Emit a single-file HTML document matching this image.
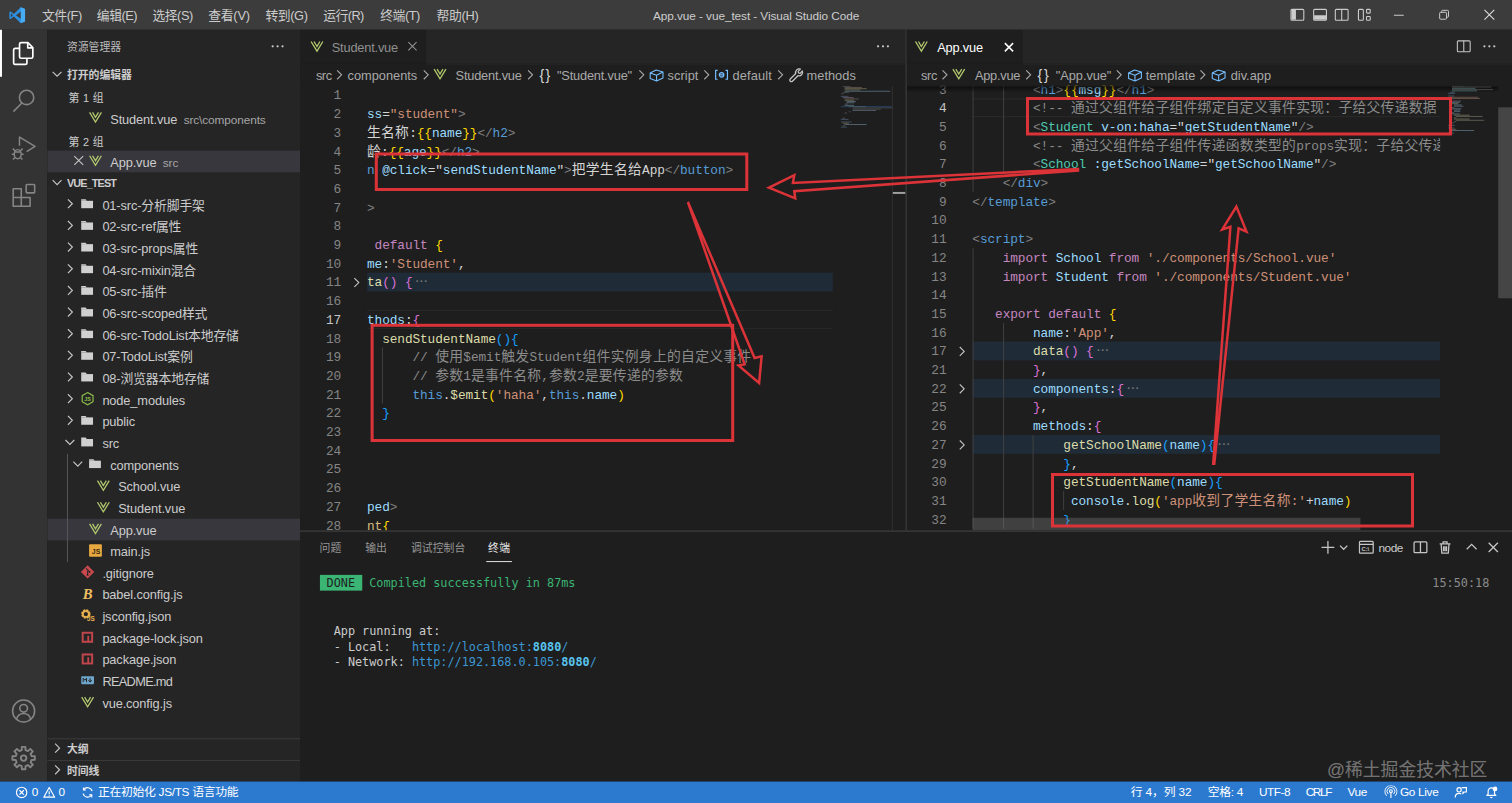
<!DOCTYPE html>
<html lang="zh-CN"><head><meta charset="utf-8"><title>App.vue - vue_test - Visual Studio Code</title>
<style>
*{box-sizing:border-box;margin:0;padding:0}
html,body{width:1512px;height:803px;overflow:hidden;background:#1e1e1e}
body{font-family:"Liberation Sans","Noto Sans CJK SC",sans-serif;font-size:13px;color:#ccc;position:relative}
#app{position:absolute;left:0;top:0;width:1536px;height:816px;transform:scale(.984375);transform-origin:0 0;background:#1e1e1e;overflow:hidden}
.abs{position:absolute}
svg{display:block}
/* title bar */
#title{position:absolute;left:0;top:0;width:1536px;height:30.3px;z-index:5;background:#3c3c3c;color:#ccc}
#title .menu{position:absolute;top:1px;height:30px;line-height:30px;font-size:13px;white-space:nowrap}
#title .ttl{position:absolute;left:0;width:1536px;text-align:center;top:0;height:30px;line-height:30px;font-size:12.6px;color:#ccc}
/* activity bar */
#act{position:absolute;left:0;top:30px;width:48px;height:764px;background:#333333}
#act .it{position:absolute;left:0;width:48px;height:48px}
#act .it svg{position:absolute;left:12px;top:12px}
/* sidebar */
#side{position:absolute;left:48px;top:30px;width:257px;height:764px;background:#252526;overflow:hidden}
#side .row{position:absolute;left:0;width:257px;height:22px;line-height:22px;white-space:nowrap;font-size:13px;color:#ccc}
#side .row.sel{background:#37373d}
#side .hdr{font-weight:bold;font-size:11px;color:#ccc}
#side .lbl{position:absolute;top:2.1px;font-size:13px;letter-spacing:-.12px}
#side .lbl.hdr{top:0;font-size:11px;letter-spacing:0}
#side .desc{color:#a5a5a5;font-size:12px;margin-left:6.5px;letter-spacing:-.1px}
#side .ic{position:absolute;top:2.3px}
/* editor groups */
.grp{position:absolute;top:30px;height:509px;background:#1e1e1e;overflow:hidden}
.tabs{position:absolute;left:0;top:0;right:0;height:35px;background:#252526}
.tab{position:absolute;top:0;height:35px;background:#1e1e1e;line-height:38.6px;font-size:13px;white-space:nowrap}
.bc{position:absolute;left:0;top:35px;right:0;height:22px;line-height:24.2px;font-size:13px;color:#a9a9a9;white-space:nowrap;background:#1e1e1e}
.bc span,.bc svg{position:absolute}
.ed{position:absolute;left:0;top:57px;right:0;bottom:0;overflow:hidden}
.ln{position:absolute;left:0;height:19px;line-height:19px;font-family:"Liberation Mono","Noto Sans CJK SC",monospace;font-size:12.83px;white-space:pre}
.ln .no{position:absolute;left:0;top:.7px;width:41.5px;text-align:right;color:#858585}
.ln .no.cur{color:#c6c6c6}
.ln .tx{position:absolute;top:1.2px;color:#d4d4d4}
.ln .tx i{font-style:normal}
.fold{background:rgba(38,79,120,.3)}
/* panel */
#panel{position:absolute;left:305px;top:540px;width:1231px;height:254px;background:#1e1e1e}
#panel .pt{position:absolute;top:0;height:35px;line-height:35px;font-size:11px;color:#969696;white-space:nowrap}
.term{position:absolute;font-family:"DejaVu Sans Mono","Noto Sans CJK SC",monospace;font-size:12px;line-height:16.2px;white-space:pre;color:#ccc}
/* status */
#status{position:absolute;left:0;top:794px;width:1536px;height:22px;background:#2c7ad0;color:#fff;font-size:12px;line-height:23.2px;white-space:nowrap}
#status span,#status svg{position:absolute}
#anno{position:absolute;left:0;top:0;width:1512px;height:803px;pointer-events:none}
.ln{font-size:13px;letter-spacing:-.1px}
.ln b{font-weight:normal;font-size:14px;letter-spacing:.3px}
.term b{font-weight:bold}
#g2 .ln .no{width:40.2px}
</style></head>
<body>
<div id="app">
<div id="title">
<svg class="abs" style="left:9px;top:7px" width="17" height="17" viewBox="0 0 100 100"><path fill="#2c8fe0" d="M71 2 30 42 11 27 3 31v38l8 4 19-15 41 40 26-11V13z"/><path fill="#3c3c3c" d="M72 28 42 50l30 22zM12 38v24l12-12z"/><path fill="#4aaef5" d="M71 2 97 13v74L71 98z" opacity=".95"/></svg>
<div class="menu" style="left:42.7px;letter-spacing:-0.46px">文件(F)</div>
<div class="menu" style="left:98.4px;letter-spacing:-0.48px">编辑(E)</div>
<div class="menu" style="left:154.8px;letter-spacing:-0.46px">选择(S)</div>
<div class="menu" style="left:211.6px;letter-spacing:-0.26px">查看(V)</div>
<div class="menu" style="left:269.7px;letter-spacing:-0.42px">转到(G)</div>
<div class="menu" style="left:328.5px;letter-spacing:-0.60px">运行(R)</div>
<div class="menu" style="left:386.3px;letter-spacing:-0.46px">终端(T)</div>
<div class="menu" style="left:443.4px;letter-spacing:-0.28px">帮助(H)</div>
<div class="menu" style="left:663.4px;font-size:12px;letter-spacing:-0.08px">App.vue - vue_test - Visual Studio Code</div>
<svg class="abs" style="left:1309.5px;top:7px" width="16" height="16" viewBox="0 0 16 16" fill="none" stroke="#ccc" stroke-width="1.1"><rect x="1.5" y="2.5" width="13" height="11" rx="1"/><rect x="2" y="3" width="4.5" height="10" fill="#ccc" stroke="none"/></svg>
<svg class="abs" style="left:1332.5px;top:7px" width="16" height="16" viewBox="0 0 16 16" fill="none" stroke="#ccc" stroke-width="1.1"><rect x="1.5" y="2.5" width="13" height="11" rx="1"/><rect x="2" y="8.5" width="12" height="4.5" fill="#ccc" stroke="none"/></svg>
<svg class="abs" style="left:1354.5px;top:7px" width="16" height="16" viewBox="0 0 16 16" fill="none" stroke="#ccc" stroke-width="1.1"><rect x="1.5" y="2.5" width="13" height="11" rx="1"/><path d="M8 2.5v11"/></svg>
<svg class="abs" style="left:1377.5px;top:7px" width="16" height="16" viewBox="0 0 16 16" fill="none" stroke="#ccc" stroke-width="1.1"><rect x="2" y="2.5" width="5" height="11" rx="1"/><rect x="10.2" y="2.5" width="3.8" height="3.8" rx=".8"/><rect x="10.2" y="9.7" width="3.8" height="3.8" rx=".8"/></svg>
<svg class="abs" style="left:1415px;top:9px" width="12" height="12" viewBox="0 0 12 12" stroke="#ccc" stroke-width="1" fill="none"><path d="M1 6.5h10"/></svg>
<svg class="abs" style="left:1461px;top:9px" width="12" height="12" viewBox="0 0 12 12" stroke="#ccc" stroke-width="1" fill="none"><rect x="1.5" y="3.5" width="7" height="7" rx="1"/><path d="M3.5 3.5v-1a1 1 0 0 1 1-1h5a1 1 0 0 1 1 1v5a1 1 0 0 1-1 1h-1"/></svg>
<svg class="abs" style="left:1507px;top:9px" width="12" height="12" viewBox="0 0 12 12" stroke="#ddd" stroke-width="1.1" fill="none"><path d="M1 1l10 10M11 1 1 11"/></svg>
</div>
<div id="act">
<div class="abs" style="left:0;top:0;width:2px;height:48px;background:#fff"></div>
<div class="it" style="top:0px"><svg width="24" height="24" viewBox="0 0 24 24" fill="none" stroke="#fff" stroke-width="1.7" stroke-linejoin="round" style="overflow:visible"><path d="M9.350 1.350h7l5 5v9.300a1.500 1.500 0 0 1-1.500 1.500h-10.500a1.500 1.500 0 0 1-1.500-1.500v-12.800a1.500 1.500 0 0 1 1.500-1.500z"/><path d="M16.200 1.600v5h5"/><path d="M7.850 7.150h-4.500a1.500 1.500 0 0 0-1.500 1.500v13.300a1.500 1.500 0 0 0 1.500 1.500h10.500a1.500 1.500 0 0 0 1.500-1.500v-4.800"/></svg></div>
<div class="it" style="top:48px"><svg width="24" height="24" viewBox="0 0 24 24" fill="none" stroke="#858585" stroke-width="1.6" stroke-linejoin="round" style="overflow:visible"><circle cx="15" cy="9" r="7.300"/><path d="M10.200 14.600 1.600 23.400"/></svg></div>
<div class="it" style="top:96px"><svg width="24" height="24" viewBox="0 0 24 24" fill="none" stroke="#858585" stroke-width="1.5" stroke-linejoin="round" style="overflow:visible"><path d="M7.800 10V1.200l15.800 9.500-8.500 5.300"/><ellipse cx="6" cy="18.600" rx="3.500" ry="4.600" /><path d="M3.300 15.200 1 13M8.700 15.200 11 13M2.500 18.800H0M9.500 18.800H12M3.300 22 1.200 24M8.700 22l2.100 2M2.800 16.500h6.400"/></svg></div>
<div class="it" style="top:144px"><svg width="24" height="24" viewBox="0 0 24 24" fill="none" stroke="#858585" stroke-width="1.6" stroke-linejoin="round" style="overflow:visible"><path d="M1.400 5.800h8.200v8.800h9v9H1.400zM1.400 14.600h8.200v9"/><rect x="14.600" y="1.500" width="8.600" height="8.400" rx=".8"/></svg></div>
<div class="it" style="top:668px"><svg width="24" height="24" viewBox="0 0 24 24" fill="none" stroke="#858585" stroke-width="1.6" stroke-linejoin="round" style="overflow:visible"><circle cx="12" cy="12.300" r="11.200"/><circle cx="12" cy="9.500" r="3.900"/><path d="M4.800 20.500c1-3.600 3.700-5.700 7.200-5.700s6.200 2.100 7.200 5.700"/></svg></div>
<div class="it" style="top:716px"><svg width="24" height="24" viewBox="0 0 24 24" fill="none" stroke="#858585" stroke-width="1.9" stroke-linejoin="round" style="overflow:visible"><circle cx="12" cy="12.100" r="2.800"/><path d="M13.94 20.17L13.80 23.46L10.20 23.46L10.06 20.17L7.66 19.18L5.24 21.40L2.70 18.86L4.92 16.44L3.93 14.04L0.64 13.90L0.64 10.30L3.93 10.16L4.92 7.76L2.70 5.34L5.24 2.80L7.66 5.02L10.06 4.03L10.20 0.74L13.80 0.74L13.94 4.03L16.34 5.02L18.76 2.80L21.30 5.34L19.08 7.76L20.07 10.16L23.36 10.30L23.36 13.90L20.07 14.04L19.08 16.44L21.30 18.86L18.76 21.40L16.34 19.18Z"/></svg></div>
</div>
<div id="side">
<div class="abs" style="left:20px;top:1.3px;height:35px;line-height:35px;font-size:11px;color:#bbb">资源管理器</div>
<svg class="abs" style="left:226px;top:8.600px" width="16" height="16" viewBox="0 0 16 16" fill="#c5c5c5"><circle cx="3" cy="8" r="1.150"/><circle cx="8" cy="8" r="1.150"/><circle cx="13" cy="8" r="1.150"/></svg>
<div class="row " style="top:35px"><svg class="ic" style="left:1.7px" width="16" height="16" viewBox="0 0 16 16" fill="none" stroke="#c5c5c5" stroke-width="1.200"><path d="M3.500 6l4.500 4.500L12.500 6"/></svg><span class="lbl hdr" style="left:20px">打开的编辑器</span></div>
<div class="row " style="top:57px"><span class="lbl" style="left:21.500px;font-size:11px;top:1.8px;letter-spacing:.4px">第 1 组</span></div>
<div class="row " style="top:79px"><svg class="ic" style="left:40.5px" width="16" height="16" viewBox="0 0 16 16" fill="none" stroke="#b3c96e" stroke-width="1.300"><path d="M2 3.200l6 9.800 6-9.800"/><path d="M5 3.200l3 5 3-5"/></svg><span class="lbl" style="left:64px;top:2.1px">Student.vue<span class="desc">src\components</span></span></div>
<div class="row " style="top:101px"><span class="lbl" style="left:21.500px;font-size:11px;top:1.8px;letter-spacing:.4px">第 2 组</span></div>
<div class="row sel" style="top:123px"><svg class="ic" style="left:24px" width="16" height="16" viewBox="0 0 16 16" fill="none" stroke="#c5c5c5" stroke-width="1.100"><path d="M3.500 3.500l9 9M12.500 3.500l-9 9"/></svg><svg class="ic" style="left:40.5px" width="16" height="16" viewBox="0 0 16 16" fill="none" stroke="#b3c96e" stroke-width="1.300"><path d="M2 3.200l6 9.800 6-9.800"/><path d="M5 3.200l3 5 3-5"/></svg><span class="lbl" style="left:64px;top:2.1px">App.vue<span class="desc">src</span></span></div>
<div class="row " style="top:145px"><svg class="ic" style="left:1.7px" width="16" height="16" viewBox="0 0 16 16" fill="none" stroke="#c5c5c5" stroke-width="1.200"><path d="M3.500 6l4.500 4.500L12.500 6"/></svg><span class="lbl hdr" style="left:20px;letter-spacing:-0.86px">VUE_TEST</span></div>
<div class="row " style="top:167px"><svg class="ic" style="left:15px" width="16" height="16" viewBox="0 0 16 16" fill="none" stroke="#c5c5c5" stroke-width="1.200"><path d="M6 3.500l4.500 4.500L6 12.500"/></svg><svg class="ic" style="left:32.6px" width="16" height="16" viewBox="0 0 16 16" fill="#d0d0d0"><path d="M1.500 3.500h4.500l1.200 1.500h-5.700z"/><rect x="1.500" y="5" width="12" height="7.500"/></svg><span class="lbl" style="left:56px;top:0.7px">01-src-分析脚手架</span></div>
<div class="row " style="top:189px"><svg class="ic" style="left:15px" width="16" height="16" viewBox="0 0 16 16" fill="none" stroke="#c5c5c5" stroke-width="1.200"><path d="M6 3.500l4.500 4.500L6 12.500"/></svg><svg class="ic" style="left:32.6px" width="16" height="16" viewBox="0 0 16 16" fill="#d0d0d0"><path d="M1.500 3.500h4.500l1.200 1.500h-5.700z"/><rect x="1.500" y="5" width="12" height="7.500"/></svg><span class="lbl" style="left:56px;top:0.7px">02-src-ref属性</span></div>
<div class="row " style="top:211px"><svg class="ic" style="left:15px" width="16" height="16" viewBox="0 0 16 16" fill="none" stroke="#c5c5c5" stroke-width="1.200"><path d="M6 3.500l4.500 4.500L6 12.500"/></svg><svg class="ic" style="left:32.6px" width="16" height="16" viewBox="0 0 16 16" fill="#d0d0d0"><path d="M1.500 3.500h4.500l1.200 1.500h-5.700z"/><rect x="1.500" y="5" width="12" height="7.500"/></svg><span class="lbl" style="left:56px;top:0.7px">03-src-props属性</span></div>
<div class="row " style="top:233px"><svg class="ic" style="left:15px" width="16" height="16" viewBox="0 0 16 16" fill="none" stroke="#c5c5c5" stroke-width="1.200"><path d="M6 3.500l4.500 4.500L6 12.500"/></svg><svg class="ic" style="left:32.6px" width="16" height="16" viewBox="0 0 16 16" fill="#d0d0d0"><path d="M1.500 3.500h4.500l1.200 1.500h-5.700z"/><rect x="1.500" y="5" width="12" height="7.500"/></svg><span class="lbl" style="left:56px;top:0.7px">04-src-mixin混合</span></div>
<div class="row " style="top:255px"><svg class="ic" style="left:15px" width="16" height="16" viewBox="0 0 16 16" fill="none" stroke="#c5c5c5" stroke-width="1.200"><path d="M6 3.500l4.500 4.500L6 12.500"/></svg><svg class="ic" style="left:32.6px" width="16" height="16" viewBox="0 0 16 16" fill="#d0d0d0"><path d="M1.500 3.500h4.500l1.200 1.500h-5.700z"/><rect x="1.500" y="5" width="12" height="7.500"/></svg><span class="lbl" style="left:56px;top:0.7px">05-src-插件</span></div>
<div class="row " style="top:277px"><svg class="ic" style="left:15px" width="16" height="16" viewBox="0 0 16 16" fill="none" stroke="#c5c5c5" stroke-width="1.200"><path d="M6 3.500l4.500 4.500L6 12.500"/></svg><svg class="ic" style="left:32.6px" width="16" height="16" viewBox="0 0 16 16" fill="#d0d0d0"><path d="M1.500 3.500h4.500l1.200 1.500h-5.700z"/><rect x="1.500" y="5" width="12" height="7.500"/></svg><span class="lbl" style="left:56px;top:0.7px">06-src-scoped样式</span></div>
<div class="row " style="top:299px"><svg class="ic" style="left:15px" width="16" height="16" viewBox="0 0 16 16" fill="none" stroke="#c5c5c5" stroke-width="1.200"><path d="M6 3.500l4.500 4.500L6 12.500"/></svg><svg class="ic" style="left:32.6px" width="16" height="16" viewBox="0 0 16 16" fill="#d0d0d0"><path d="M1.500 3.500h4.500l1.200 1.500h-5.700z"/><rect x="1.500" y="5" width="12" height="7.500"/></svg><span class="lbl" style="left:56px;top:0.7px">06-src-TodoList本地存储</span></div>
<div class="row " style="top:321px"><svg class="ic" style="left:15px" width="16" height="16" viewBox="0 0 16 16" fill="none" stroke="#c5c5c5" stroke-width="1.200"><path d="M6 3.500l4.500 4.500L6 12.500"/></svg><svg class="ic" style="left:32.6px" width="16" height="16" viewBox="0 0 16 16" fill="#d0d0d0"><path d="M1.500 3.500h4.500l1.200 1.500h-5.700z"/><rect x="1.500" y="5" width="12" height="7.500"/></svg><span class="lbl" style="left:56px;top:0.7px">07-TodoList案例</span></div>
<div class="row " style="top:343px"><svg class="ic" style="left:15px" width="16" height="16" viewBox="0 0 16 16" fill="none" stroke="#c5c5c5" stroke-width="1.200"><path d="M6 3.500l4.500 4.500L6 12.500"/></svg><svg class="ic" style="left:32.6px" width="16" height="16" viewBox="0 0 16 16" fill="#d0d0d0"><path d="M1.500 3.500h4.500l1.200 1.500h-5.700z"/><rect x="1.500" y="5" width="12" height="7.500"/></svg><span class="lbl" style="left:56px;top:0.7px">08-浏览器本地存储</span></div>
<div class="row " style="top:365px"><svg class="ic" style="left:15px" width="16" height="16" viewBox="0 0 16 16" fill="none" stroke="#c5c5c5" stroke-width="1.200"><path d="M6 3.500l4.500 4.500L6 12.500"/></svg><svg class="ic" style="left:32.6px" width="16" height="16" viewBox="0 0 16 16" fill="none" stroke="#8dc149" stroke-width="1.200"><path d="M8 1.800l5.500 3.100v6.200L8 14.200l-5.500-3.100V4.900z"/><text x="8" y="10.300" font-size="5.500" font-weight="bold" fill="#8dc149" stroke="none" text-anchor="middle" font-family="Liberation Sans,sans-serif">JS</text></svg><span class="lbl" style="left:56px;top:1.1px">node_modules</span></div>
<div class="row " style="top:387px"><svg class="ic" style="left:15px" width="16" height="16" viewBox="0 0 16 16" fill="none" stroke="#c5c5c5" stroke-width="1.200"><path d="M6 3.500l4.500 4.500L6 12.500"/></svg><svg class="ic" style="left:32.6px" width="16" height="16" viewBox="0 0 16 16" fill="#d0d0d0"><path d="M1.500 3.500h4.500l1.200 1.500h-5.700z"/><rect x="1.500" y="5" width="12" height="7.500"/></svg><span class="lbl" style="left:56px;top:1.1px">public</span></div>
<div class="row " style="top:409px"><svg class="ic" style="left:15px" width="16" height="16" viewBox="0 0 16 16" fill="none" stroke="#c5c5c5" stroke-width="1.200"><path d="M3.500 6l4.500 4.500L12.500 6"/></svg><svg class="ic" style="left:32.6px" width="16" height="16" viewBox="0 0 16 16" fill="#d0d0d0"><path d="M1.500 3.500h4.500l1.200 1.500h-5.700z"/><rect x="1.500" y="5" width="12" height="7.500"/></svg><span class="lbl" style="left:56px;top:1.1px">src</span></div>
<div class="row " style="top:431px"><svg class="ic" style="left:23px" width="16" height="16" viewBox="0 0 16 16" fill="none" stroke="#c5c5c5" stroke-width="1.200"><path d="M3.500 6l4.500 4.500L12.500 6"/></svg><svg class="ic" style="left:40.6px" width="16" height="16" viewBox="0 0 16 16" fill="#d0d0d0"><path d="M1.500 3.500h4.500l1.200 1.500h-5.700z"/><rect x="1.500" y="5" width="12" height="7.500"/></svg><span class="lbl" style="left:64px;top:1.1px">components</span></div>
<div class="row " style="top:453px"><svg class="ic" style="left:48.6px" width="16" height="16" viewBox="0 0 16 16" fill="none" stroke="#b3c96e" stroke-width="1.300"><path d="M2 3.200l6 9.800 6-9.800"/><path d="M5 3.200l3 5 3-5"/></svg><span class="lbl" style="left:72px;top:1.1px">School.vue</span></div>
<div class="row " style="top:475px"><svg class="ic" style="left:48.6px" width="16" height="16" viewBox="0 0 16 16" fill="none" stroke="#b3c96e" stroke-width="1.300"><path d="M2 3.200l6 9.800 6-9.800"/><path d="M5 3.200l3 5 3-5"/></svg><span class="lbl" style="left:72px;top:1.1px">Student.vue</span></div>
<div class="row sel" style="top:497px"><svg class="ic" style="left:40.6px" width="16" height="16" viewBox="0 0 16 16" fill="none" stroke="#b3c96e" stroke-width="1.300"><path d="M2 3.200l6 9.800 6-9.800"/><path d="M5 3.200l3 5 3-5"/></svg><span class="lbl" style="left:64px;top:1.1px">App.vue</span></div>
<div class="row " style="top:519px"><svg class="ic" style="left:40.6px" width="16" height="16" viewBox="0 0 16 16"><rect x="1.500" y="2" width="13" height="12.500" rx="1" fill="#e8a840"/><text x="8.600" y="12.200" font-size="7" font-weight="bold" fill="#3a2a10" text-anchor="middle" font-family="Liberation Sans,sans-serif">JS</text></svg><span class="lbl" style="left:64px;top:1.1px">main.js</span></div>
<div class="row " style="top:541px"><svg class="ic" style="left:32.6px" width="16" height="16" viewBox="0 0 16 16"><path d="M8 1.200l6.800 6.800L8 14.800 1.200 8z" fill="#c9494d"/><path d="M6.500 4.500l3 3M8 7v4" stroke="#252526" stroke-width="1.100" fill="none"/><circle cx="8" cy="11" r="1" fill="#252526"/><circle cx="10" cy="8" r="1" fill="#252526"/></svg><span class="lbl" style="left:56px;top:1.1px">.gitignore</span></div>
<div class="row " style="top:563px"><svg class="ic" style="left:32.6px" width="16" height="16" viewBox="0 0 16 16"><text x="8" y="13.500" font-size="15" font-style="italic" font-weight="bold" fill="#f0c060" text-anchor="middle" font-family="Liberation Serif,serif">B</text></svg><span class="lbl" style="left:56px;top:1.1px">babel.config.js</span></div>
<div class="row " style="top:585px"><svg class="ic" style="left:32.6px" width="16" height="16" viewBox="0 0 16 16"><circle cx="6.200" cy="6.800" r="3.600" fill="none" stroke="#eab54e" stroke-width="2.400" stroke-dasharray="1.900 .93"/><circle cx="6.200" cy="6.800" r="3" fill="none" stroke="#eab54e" stroke-width="1.600"/><text x="11.300" y="14" font-size="6.500" font-weight="bold" fill="#eab54e" text-anchor="middle" font-family="Liberation Sans,sans-serif">JS</text></svg><span class="lbl" style="left:56px;top:1.1px">jsconfig.json</span></div>
<div class="row " style="top:607px"><svg class="ic" style="left:32.6px" width="16" height="16" viewBox="0 0 16 16"><rect x="2" y="2.800" width="11.600" height="11.200" fill="#c0464b"/><path d="M4 4.800h7.600v7.200h-2v-5.200h-1.900v5.200H4z" fill="#252526"/></svg><span class="lbl" style="left:56px;top:1.1px">package-lock.json</span></div>
<div class="row " style="top:629px"><svg class="ic" style="left:32.6px" width="16" height="16" viewBox="0 0 16 16"><rect x="2" y="2.800" width="11.600" height="11.200" fill="#c0464b"/><path d="M4 4.800h7.600v7.200h-2v-5.200h-1.900v5.200H4z" fill="#252526"/></svg><span class="lbl" style="left:56px;top:1.1px">package.json</span></div>
<div class="row " style="top:651px"><svg class="ic" style="left:32.6px" width="16" height="16" viewBox="0 0 16 16"><rect x="1.500" y="4" width="13" height="8" rx=".800" fill="#6ea6cc"/><path d="M3.500 10V6l1.700 2 1.700-2v4M10.500 6v3.500M8.800 8l1.700 2 1.700-2" stroke="#252526" stroke-width="1" fill="none"/></svg><span class="lbl" style="left:56px;top:1.1px;letter-spacing:-.7px">README.md</span></div>
<div class="row " style="top:673px"><svg class="ic" style="left:32.6px" width="16" height="16" viewBox="0 0 16 16" fill="none" stroke="#b3c96e" stroke-width="1.300"><path d="M2 3.200l6 9.800 6-9.800"/><path d="M5 3.200l3 5 3-5"/></svg><span class="lbl" style="left:56px;top:1.1px">vue.config.js</span></div>
<div class="abs" style="left:20px;top:431px;width:1px;height:110px;background:#585858"></div>
<div class="abs" style="left:0;top:720px;width:257px;height:1px;background:#3c3c3c"></div>
<div class="row " style="top:720px"><svg class="ic" style="left:1.7px" width="16" height="16" viewBox="0 0 16 16" fill="none" stroke="#c5c5c5" stroke-width="1.200"><path d="M6 3.500l4.500 4.500L6 12.500"/></svg><span class="lbl hdr" style="left:20px">大纲</span></div>
<div class="abs" style="left:0;top:742px;width:257px;height:1px;background:#3c3c3c"></div>
<div class="row " style="top:742px"><svg class="ic" style="left:1.7px" width="16" height="16" viewBox="0 0 16 16" fill="none" stroke="#c5c5c5" stroke-width="1.200"><path d="M6 3.500l4.500 4.500L6 12.500"/></svg><span class="lbl hdr" style="left:20px">时间线</span></div>
</div>
<div class="grp" style="left:305px;width:616px">
<div class="tabs">
<div class="tab" style="left:0;width:128px;color:#909090"><svg class="abs" style="left:8.7px;top:9px" width="16" height="16" viewBox="0 0 16 16" fill="none" stroke="#b3c96e" stroke-width="1.3"><path d="M2 3.200l6 9.800 6-9.800"/><path d="M5 3.200l3 5 3-5"/></svg><span class="abs" style="font-size:13px;left:32.0px;letter-spacing:-0.19px">Student.vue</span><svg class="abs" style="left:105.500px;top:8.700px" width="16" height="16" viewBox="0 0 16 16" fill="none" stroke="#909090" stroke-width="1.100"><path d="M3.800 3.800l8.400 8.400M12.200 3.800l-8.400 8.400"/></svg></div>
<svg class="abs" style="left:584px;top:8.700px" width="16" height="16" viewBox="0 0 16 16" fill="#c5c5c5"><circle cx="3" cy="8" r="1.150"/><circle cx="8" cy="8" r="1.150"/><circle cx="13" cy="8" r="1.150"/></svg>
</div>
<div class="bc">
<span style="left:15.9px;font-size:13px;letter-spacing:-0.43px;">src</span>
<svg style="left:32.1px;top:3px" width="16" height="16" viewBox="0 0 16 16" fill="none" stroke="#a9a9a9" stroke-width="1.100"><path d="M5.500 3.500l4.500 4.500-4.500 4.500"/></svg>
<span style="left:48.1px;font-size:13px;letter-spacing:-0.01px;">components</span>
<svg style="left:120.3px;top:3px" width="16" height="16" viewBox="0 0 16 16" fill="none" stroke="#a9a9a9" stroke-width="1.100"><path d="M5.500 3.500l4.500 4.500-4.500 4.500"/></svg>
<svg class="" style="left:133.889px;top:1.5px" width="16" height="16" viewBox="0 0 16 16" fill="none" stroke="#b3c96e" stroke-width="1.3"><path d="M2 3.200l6 9.800 6-9.800"/><path d="M5 3.200l3 5 3-5"/></svg>
<span style="left:157.8px;font-size:13px;letter-spacing:-0.20px;">Student.vue</span>
<svg style="left:226.2px;top:3px" width="16" height="16" viewBox="0 0 16 16" fill="none" stroke="#a9a9a9" stroke-width="1.100"><path d="M5.500 3.500l4.500 4.500-4.500 4.500"/></svg>
<span style="left:243.0px;font-size:14.5px;letter-spacing:1.20px;color:#d4d4d4;top:-1px">{}</span>
<span style="left:260.8px;font-size:13px;letter-spacing:-0.19px;">"Student.vue"</span>
<svg style="left:338.5px;top:3px" width="16" height="16" viewBox="0 0 16 16" fill="none" stroke="#a9a9a9" stroke-width="1.100"><path d="M5.500 3.500l4.500 4.500-4.500 4.500"/></svg>
<svg style="left:354.3px;top:3px" width="16" height="16" viewBox="0 0 16 16" fill="none" stroke="#75beff" stroke-width="1.100" stroke-linejoin="round"><path d="M1.500 6.200l6-3 7 2v6l-6.500 3-6.500-2.500z"/><path d="M1.500 6.200l6.500 2.300 6.500-3.300M8 8.500v5.700"/></svg>
<span style="left:373.1px;font-size:13px;letter-spacing:0.07px;">script</span>
<svg style="left:404.5px;top:3px" width="16" height="16" viewBox="0 0 16 16" fill="none" stroke="#a9a9a9" stroke-width="1.100"><path d="M5.500 3.500l4.500 4.500-4.500 4.500"/></svg>
<svg style="left:420.3px;top:3px" width="16" height="16" viewBox="0 0 16 16" fill="none" stroke="#75beff" stroke-width="1.200"><path d="M4 3.500H2v9h2M12 3.500h2v9h-2"/><circle cx="8" cy="8" r="2.300"/><path d="M5.700 8h4.600"/></svg>
<span style="left:439.0px;font-size:13px;letter-spacing:0.17px;">default</span>
<svg style="left:479.6px;top:3px" width="16" height="16" viewBox="0 0 16 16" fill="none" stroke="#a9a9a9" stroke-width="1.100"><path d="M5.500 3.500l4.500 4.500-4.500 4.500"/></svg>
<svg style="left:496.0px;top:2.500px" width="16" height="16" viewBox="0 0 16 16" fill="none" stroke="#c5c5c5" stroke-width="1.300" stroke-linejoin="round"><path d="M1.800 12.300l5.600-5.600a3.600 3.600 0 0 1 4.700-4.500l-2.300 2.300.400 1.600 1.600.400 2.300-2.300a3.600 3.600 0 0 1-4.500 4.700l-5.600 5.600a1.500 1.500 0 0 1-2.200-2.200z"/></svg>
<span style="left:514.4px;font-size:13px;letter-spacing:0.02px;">methods</span>
</div>
<div class="abs" style="left:128px;top:35px;right:0;height:1.400px;background:#252526"></div>
<div class="ed">
<div class="abs" style="left:67.800px;top:228px;width:473px;height:19px;border-top:1px solid #2b2b2b;border-bottom:1px solid #2b2b2b"></div>
<div class="ln" style="top:0px;width:100%"><span class="no">1</span></div>
<div class="ln" style="top:19px;width:100%"><span class="no">2</span><span class="tx" style="left:67.8px"><i style="color:#9cdcfe">ss</i><i style="color:#d4d4d4">=</i><i style="color:#ce9178">"student"</i><i style="color:#808080">&gt;</i></span></div>
<div class="ln" style="top:38px;width:100%"><span class="no">3</span><span class="tx" style="left:67.8px"><i style="color:#d4d4d4"><b>生名称</b>:</i><i style="color:#ffd700">{{</i><i style="color:#9cdcfe">name</i><i style="color:#ffd700">}}</i><i style="color:#808080">&lt;/</i><i style="color:#569cd6">h2</i><i style="color:#808080">&gt;</i></span></div>
<div class="ln" style="top:57px;width:100%"><span class="no">4</span><span class="tx" style="left:67.8px"><i style="color:#d4d4d4"><b>龄</b>:</i><i style="color:#ffd700">{{</i><i style="color:#9cdcfe">age</i><i style="color:#ffd700">}}</i><i style="color:#808080">&lt;/</i><i style="color:#569cd6">h2</i><i style="color:#808080">&gt;</i></span></div>
<div class="ln" style="top:76px;width:100%"><span class="no">5</span><span class="tx" style="left:67.8px"><i style="color:#569cd6">n</i><i style="color:#9cdcfe"> @click</i><i style="color:#d4d4d4">="</i><i style="color:#9cdcfe">sendStudentName</i><i style="color:#d4d4d4">"</i><i style="color:#808080">&gt;</i><i style="color:#d4d4d4"><b>把学生名给</b>App</i><i style="color:#808080">&lt;/</i><i style="color:#569cd6">button</i><i style="color:#808080">&gt;</i></span></div>
<div class="ln" style="top:95px;width:100%"><span class="no">6</span></div>
<div class="ln" style="top:114px;width:100%"><span class="no">7</span><span class="tx" style="left:67.8px"><i style="color:#808080">&gt;</i></span></div>
<div class="ln" style="top:133px;width:100%"><span class="no">8</span></div>
<div class="ln" style="top:152px;width:100%"><span class="no">9</span><span class="tx" style="left:67.8px"><i style="color:#c586c0"> default </i><i style="color:#ffd700">{</i></span></div>
<div class="ln" style="top:171px;width:100%"><span class="no">10</span><span class="tx" style="left:67.8px"><i style="color:#9cdcfe">me</i><i style="color:#d4d4d4">:</i><i style="color:#ce9178">'Student'</i><i style="color:#d4d4d4">,</i></span></div>
<div class="ln" style="top:190px;width:100%"><div class="abs fold" style="left:67.8px;top:0;width:473px;height:19px"></div><svg class="abs" style="left:49px;top:1.500px" width="16" height="16" viewBox="0 0 16 16" fill="none" stroke="#c5c5c5" stroke-width="1.100"><path d="M6 3.500l4.500 4.500L6 12.500"/></svg><span class="no">11</span><span class="tx" style="left:67.8px"><i style="color:#dcdcaa">ta</i><i style="color:#da70d6">() {</i><i style="color:#7a7a7a;margin-left:2.5px">⋯</i></span></div>
<div class="ln" style="top:209px;width:100%"><span class="no">16</span></div>
<div class="ln" style="top:228px;width:100%"><span class="no cur">17</span><span class="tx" style="left:67.8px"><i style="color:#9cdcfe">thods</i><i style="color:#d4d4d4">:</i><i style="color:#da70d6">{</i></span></div>
<div class="ln" style="top:247px;width:100%"><span class="no">18</span><span class="tx" style="left:67.8px"><i style="color:#dcdcaa">  sendStudentName</i><i style="color:#179fff">(){</i></span></div>
<div class="ln" style="top:266px;width:100%"><span class="no">19</span><span class="tx" style="left:67.8px"><i style="color:#8b8b8b">      // <b>使用</b>$emit<b>触发</b>Student<b>组件实例身上的自定义事件</b></i></span></div>
<div class="ln" style="top:285px;width:100%"><span class="no">20</span><span class="tx" style="left:67.8px"><i style="color:#8b8b8b">      // <b>参数</b>1<b>是事件名称</b>,<b>参数</b>2<b>是要传递的参数</b></i></span></div>
<div class="ln" style="top:304px;width:100%"><span class="no">21</span><span class="tx" style="left:67.8px"><i style="color:#569cd6">      this</i><i style="color:#d4d4d4">.</i><i style="color:#dcdcaa">$emit</i><i style="color:#ffd700">(</i><i style="color:#ce9178">'haha'</i><i style="color:#d4d4d4">,</i><i style="color:#569cd6">this</i><i style="color:#d4d4d4">.</i><i style="color:#9cdcfe">name</i><i style="color:#ffd700">)</i></span></div>
<div class="ln" style="top:323px;width:100%"><span class="no">22</span><span class="tx" style="left:67.8px"><i style="color:#179fff">  }</i></span></div>
<div class="ln" style="top:342px;width:100%"><span class="no">23</span></div>
<div class="ln" style="top:361px;width:100%"><span class="no">24</span></div>
<div class="ln" style="top:380px;width:100%"><span class="no">25</span></div>
<div class="ln" style="top:399px;width:100%"><span class="no">26</span></div>
<div class="ln" style="top:418px;width:100%"><span class="no">27</span><span class="tx" style="left:67.8px"><i style="color:#9cdcfe">ped</i><i style="color:#808080">&gt;</i></span></div>
<div class="ln" style="top:437px;width:100%"><span class="no">28</span><span class="tx" style="left:67.8px"><i style="color:#d7ba7d">nt</i><i style="color:#ffd700">{</i></span></div>
<div class="abs" style="left:83px;top:266px;width:1px;height:57px;background:#404040"></div>
<svg class="abs" style="left:549px;top:0" width="60" height="60" viewBox="0 0 60 60"><rect x="2" y="0" width="8" height="1" fill="#7a8a9a" opacity=".55"/><rect x="4" y="1.3" width="17.6" height="1" fill="#8a7a6a" opacity=".55"/><rect x="4" y="2.6" width="22.4" height="1" fill="#9a9a7a" opacity=".55"/><rect x="4" y="3.9" width="16" height="1" fill="#9a9a7a" opacity=".55"/><rect x="4" y="5.2" width="46.4" height="1" fill="#7a9ab0" opacity=".55"/><rect x="2" y="6.5" width="6.4" height="1" fill="#666" opacity=".55"/><rect x="0" y="7.8" width="3.2" height="1" fill="#666" opacity=".55"/><rect x="0" y="10.4" width="8" height="1" fill="#5a7a9a" opacity=".55"/><rect x="2" y="11.7" width="11.2" height="1" fill="#9a7a9a" opacity=".55"/><rect x="4" y="13" width="14.4" height="1" fill="#8a7a6a" opacity=".55"/><rect x="4" y="14.3" width="9.6" height="1" fill="#9a9a7a" opacity=".55"/><rect x="6" y="15.6" width="9.6" height="1" fill="#7a9ab0" opacity=".55"/><rect x="6" y="16.9" width="8" height="1" fill="#7a9ab0" opacity=".55"/><rect x="4" y="18.2" width="3.2" height="1" fill="#777" opacity=".55"/><rect x="4" y="19.5" width="9.6" height="1" fill="#7a9ab0" opacity=".55"/><rect x="8" y="20.8" width="17.6" height="1" fill="#9a9a7a" opacity=".55"/><rect x="12" y="22.1" width="41.6" height="1" fill="#6a6a6a" opacity=".55"/><rect x="12" y="23.4" width="28.8" height="1" fill="#6a6a6a" opacity=".55"/><rect x="12" y="24.7" width="24" height="1" fill="#7a8aa0" opacity=".55"/><rect x="8" y="26" width="2.4" height="1" fill="#557" opacity=".55"/><rect x="4" y="27.3" width="2.4" height="1" fill="#777" opacity=".55"/><rect x="2" y="32.5" width="2.4" height="1" fill="#777" opacity=".55"/><rect x="0" y="33.8" width="8" height="1" fill="#5a7a9a" opacity=".55"/><rect x="0" y="36.4" width="11.2" height="1" fill="#5a7a9a" opacity=".55"/><rect x="2" y="37.7" width="6.4" height="1" fill="#9a8a6a" opacity=".55"/><rect x="4" y="39" width="22.4" height="1" fill="#7a9ab0" opacity=".55"/><rect x="2" y="40.3" width="2.4" height="1" fill="#777" opacity=".55"/><rect x="0" y="41.6" width="6.4" height="1" fill="#5a7a9a" opacity=".55"/><rect x="0" y="20.6" width="52" height="1.300" fill="#264f78" opacity=".6"/></svg>
<div class="abs" style="left:600.700px;top:0;width:1px;height:452px;background:#303030"></div>
<div class="abs" style="left:601.700px;top:107.500px;width:13px;height:2px;background:#a0a0a0"></div>
</div>
</div>
<div class="grp" id="g2" style="left:920.300px;width:615.700px;border-left:1px solid #444">
<div class="tabs">
<div class="tab" style="left:0;width:118px;color:#fff"><svg class="abs" style="left:6.22381px;top:9px" width="16" height="16" viewBox="0 0 16 16" fill="none" stroke="#b3c96e" stroke-width="1.3"><path d="M2 3.200l6 9.800 6-9.800"/><path d="M5 3.200l3 5 3-5"/></svg><span class="abs" style="font-size:13px;left:30.8px;letter-spacing:-0.17px">App.vue</span><svg class="abs" style="left:95.9px;top:9.500px" width="16" height="16" viewBox="0 0 16 16" fill="none" stroke="#fff" stroke-width="1.500"><path d="M3.800 3.800l8.400 8.400M12.200 3.800l-8.400 8.400"/></svg></div>
<svg class="abs" style="left:558.1px;top:8.700px" width="16" height="16" viewBox="0 0 16 16" fill="none" stroke="#c5c5c5" stroke-width="1.100"><rect x="1.500" y="2.500" width="13" height="11" rx="1"/><path d="M8 2.500v11"/></svg>
<svg class="abs" style="left:583.6px;top:8.700px" width="16" height="16" viewBox="0 0 16 16" fill="#c5c5c5"><circle cx="3" cy="8" r="1.150"/><circle cx="8" cy="8" r="1.150"/><circle cx="13" cy="8" r="1.150"/></svg>
</div>
<div class="bc">
<span style="left:14.3px;font-size:13px;letter-spacing:-0.30px;">src</span>
<svg style="left:31.0px;top:3px" width="16" height="16" viewBox="0 0 16 16" fill="none" stroke="#a9a9a9" stroke-width="1.100"><path d="M5.500 3.500l4.500 4.500-4.500 4.500"/></svg>
<svg class="" style="left:44.4206px;top:1.5px" width="16" height="16" viewBox="0 0 16 16" fill="none" stroke="#b3c96e" stroke-width="1.3"><path d="M2 3.200l6 9.800 6-9.800"/><path d="M5 3.200l3 5 3-5"/></svg>
<span style="left:69.1px;font-size:13px;letter-spacing:-0.24px;">App.vue</span>
<svg style="left:116.1px;top:3px" width="16" height="16" viewBox="0 0 16 16" fill="none" stroke="#a9a9a9" stroke-width="1.100"><path d="M5.500 3.500l4.500 4.500-4.500 4.500"/></svg>
<span style="left:132.8px;font-size:14.5px;letter-spacing:1.76px;color:#d4d4d4;top:-1px">{}</span>
<span style="left:151.3px;font-size:13px;letter-spacing:-0.06px;">"App.vue"</span>
<svg style="left:207.7px;top:3px" width="16" height="16" viewBox="0 0 16 16" fill="none" stroke="#a9a9a9" stroke-width="1.100"><path d="M5.500 3.500l4.500 4.500-4.500 4.500"/></svg>
<svg style="left:223.6px;top:3px" width="16" height="16" viewBox="0 0 16 16" fill="none" stroke="#75beff" stroke-width="1.100" stroke-linejoin="round"><path d="M1.500 6.200l6-3 7 2v6l-6.500 3-6.500-2.500z"/><path d="M1.500 6.200l6.500 2.300 6.500-3.300M8 8.500v5.700"/></svg>
<span style="left:242.6px;font-size:13px;letter-spacing:0.09px;">template</span>
<svg style="left:293.1px;top:3px" width="16" height="16" viewBox="0 0 16 16" fill="none" stroke="#a9a9a9" stroke-width="1.100"><path d="M5.500 3.500l4.500 4.500-4.500 4.500"/></svg>
<svg style="left:308.9px;top:3px" width="16" height="16" viewBox="0 0 16 16" fill="none" stroke="#75beff" stroke-width="1.100" stroke-linejoin="round"><path d="M1.500 6.200l6-3 7 2v6l-6.500 3-6.500-2.500z"/><path d="M1.500 6.200l6.500 2.300 6.500-3.300M8 8.500v5.700"/></svg>
<span style="left:328.9px;font-size:13px;letter-spacing:0.02px;">div.app</span>
</div>
<div class="abs" style="left:118px;top:35px;right:0;height:1.400px;background:#252526"></div>
<div class="ed">
<div class="abs" style="left:0;top:0;width:542.1px;height:452px;overflow:hidden">
<div class="abs" style="left:66.5px;top:13px;width:475.6px;height:19px;border-top:1px solid #2b2b2b;border-bottom:1px solid #2b2b2b"></div>
<div class="ln" style="top:-6px;width:100%"><span class="no">3</span><span class="tx" style="left:66.5px"><i style="color:#808080">        &lt;</i><i style="color:#569cd6">h1</i><i style="color:#808080">&gt;</i><i style="color:#ffd700">{{</i><i style="color:#9cdcfe">msg</i><i style="color:#ffd700">}}</i><i style="color:#808080">&lt;/</i><i style="color:#569cd6">h1</i><i style="color:#808080">&gt;</i></span></div>
<div class="ln" style="top:13px;width:100%"><span class="no cur">4</span><span class="tx" style="left:66.5px"><i style="color:#8b8b8b">        &lt;!-- <b>通过父组件给子组件绑定自定义事件实现：子给父传递数据</b> --&gt;</i></span></div>
<div class="ln" style="top:32px;width:100%"><span class="no">5</span><span class="tx" style="left:66.5px"><i style="color:#808080">        &lt;</i><i style="color:#4ec9b0">Student</i><i style="color:#9cdcfe"> v-on:haha</i><i style="color:#d4d4d4">="</i><i style="color:#9cdcfe">getStudentName</i><i style="color:#d4d4d4">"</i><i style="color:#808080">/&gt;</i></span></div>
<div class="ln" style="top:51px;width:100%"><span class="no">6</span><span class="tx" style="left:66.5px"><i style="color:#8b8b8b">        &lt;!-- <b>通过父组件给子组件传递函数类型的</b>props<b>实现：子给父传递数据</b> --&gt;</i></span></div>
<div class="ln" style="top:70px;width:100%"><span class="no">7</span><span class="tx" style="left:66.5px"><i style="color:#808080">        &lt;</i><i style="color:#4ec9b0">School</i><i style="color:#9cdcfe"> :getSchoolName</i><i style="color:#d4d4d4">="</i><i style="color:#9cdcfe">getSchoolName</i><i style="color:#d4d4d4">"</i><i style="color:#808080">/&gt;</i></span></div>
<div class="ln" style="top:89px;width:100%"><span class="no">8</span><span class="tx" style="left:66.5px"><i style="color:#808080">    &lt;/</i><i style="color:#569cd6">div</i><i style="color:#808080">&gt;</i></span></div>
<div class="ln" style="top:108px;width:100%"><span class="no">9</span><span class="tx" style="left:66.5px"><i style="color:#808080">&lt;/</i><i style="color:#569cd6">template</i><i style="color:#808080">&gt;</i></span></div>
<div class="ln" style="top:127px;width:100%"><span class="no">10</span></div>
<div class="ln" style="top:146px;width:100%"><span class="no">11</span><span class="tx" style="left:66.5px"><i style="color:#808080">&lt;</i><i style="color:#569cd6">script</i><i style="color:#808080">&gt;</i></span></div>
<div class="ln" style="top:165px;width:100%"><span class="no">12</span><span class="tx" style="left:66.5px"><i style="color:#c586c0">    import</i><i style="color:#9cdcfe"> School </i><i style="color:#c586c0">from</i><i style="color:#ce9178"> './components/School.vue'</i></span></div>
<div class="ln" style="top:184px;width:100%"><span class="no">13</span><span class="tx" style="left:66.5px"><i style="color:#c586c0">    import</i><i style="color:#9cdcfe"> Student </i><i style="color:#c586c0">from</i><i style="color:#ce9178"> './components/Student.vue'</i></span></div>
<div class="ln" style="top:203px;width:100%"><span class="no">14</span></div>
<div class="ln" style="top:222px;width:100%"><span class="no">15</span><span class="tx" style="left:66.5px"><i style="color:#c586c0">   export default </i><i style="color:#ffd700">{</i></span></div>
<div class="ln" style="top:241px;width:100%"><span class="no">16</span><span class="tx" style="left:66.5px"><i style="color:#9cdcfe">        name</i><i style="color:#d4d4d4">:</i><i style="color:#ce9178">'App'</i><i style="color:#d4d4d4">,</i></span></div>
<div class="ln" style="top:260px;width:100%"><div class="abs fold" style="left:66.5px;top:0;width:475.565px;height:19px"></div><svg class="abs" style="left:47.5px;top:1.500px" width="16" height="16" viewBox="0 0 16 16" fill="none" stroke="#c5c5c5" stroke-width="1.100"><path d="M6 3.500l4.500 4.500L6 12.500"/></svg><span class="no">17</span><span class="tx" style="left:66.5px"><i style="color:#dcdcaa">        data</i><i style="color:#da70d6">() {</i><i style="color:#7a7a7a;margin-left:2.5px">⋯</i></span></div>
<div class="ln" style="top:279px;width:100%"><span class="no">21</span><span class="tx" style="left:66.5px"><i style="color:#da70d6">        }</i><i style="color:#d4d4d4">,</i></span></div>
<div class="ln" style="top:298px;width:100%"><div class="abs fold" style="left:66.5px;top:0;width:475.565px;height:19px"></div><svg class="abs" style="left:47.5px;top:1.500px" width="16" height="16" viewBox="0 0 16 16" fill="none" stroke="#c5c5c5" stroke-width="1.100"><path d="M6 3.500l4.500 4.500L6 12.500"/></svg><span class="no">22</span><span class="tx" style="left:66.5px"><i style="color:#9cdcfe">        components</i><i style="color:#d4d4d4">:</i><i style="color:#da70d6">{</i><i style="color:#7a7a7a;margin-left:2.5px">⋯</i></span></div>
<div class="ln" style="top:317px;width:100%"><span class="no">25</span><span class="tx" style="left:66.5px"><i style="color:#da70d6">        }</i><i style="color:#d4d4d4">,</i></span></div>
<div class="ln" style="top:336px;width:100%"><span class="no">26</span><span class="tx" style="left:66.5px"><i style="color:#9cdcfe">        methods</i><i style="color:#d4d4d4">:</i><i style="color:#da70d6">{</i></span></div>
<div class="ln" style="top:355px;width:100%"><div class="abs fold" style="left:66.5px;top:0;width:475.565px;height:19px"></div><svg class="abs" style="left:47.5px;top:1.500px" width="16" height="16" viewBox="0 0 16 16" fill="none" stroke="#c5c5c5" stroke-width="1.100"><path d="M6 3.500l4.500 4.500L6 12.500"/></svg><span class="no">27</span><span class="tx" style="left:66.5px"><i style="color:#dcdcaa">            getSchoolName</i><i style="color:#179fff">(</i><i style="color:#9cdcfe">name</i><i style="color:#179fff">){</i><i style="color:#7a7a7a;margin-left:2.5px">⋯</i></span></div>
<div class="ln" style="top:374px;width:100%"><span class="no">29</span><span class="tx" style="left:66.5px"><i style="color:#179fff">            }</i><i style="color:#d4d4d4">,</i></span></div>
<div class="ln" style="top:393px;width:100%"><span class="no">30</span><span class="tx" style="left:66.5px"><i style="color:#dcdcaa">            getStudentName</i><i style="color:#179fff">(</i><i style="color:#9cdcfe">name</i><i style="color:#179fff">){</i></span></div>
<div class="ln" style="top:412px;width:100%"><span class="no">31</span><span class="tx" style="left:66.5px"><i style="color:#9cdcfe">             console</i><i style="color:#d4d4d4">.</i><i style="color:#dcdcaa">log</i><i style="color:#ffd700">(</i><i style="color:#ce9178">'app<b>收到了学生名称</b>:'</i><i style="color:#d4d4d4">+</i><i style="color:#9cdcfe">name</i><i style="color:#ffd700">)</i></span></div>
<div class="ln" style="top:431px;width:100%"><span class="no">32</span><span class="tx" style="left:66.5px"><i style="color:#179fff">            }</i></span></div>
<div class="abs" style="left:66.5px;top:-6px;width:1px;height:114px;background:#404040"></div>
<div class="abs" style="left:66.5px;top:165px;width:1px;height:285px;background:#404040"></div>
<div class="abs" style="left:97.3px;top:-6px;width:1px;height:95px;background:#404040"></div>
<div class="abs" style="left:97.3px;top:241px;width:1px;height:209px;background:#404040"></div>
<div class="abs" style="left:128.1px;top:355px;width:1px;height:95px;background:#404040"></div>
<div class="abs" style="left:158.9px;top:412px;width:1px;height:19px;background:#404040"></div>
</div>
<div class="abs" style="left:0;top:0;width:601px;height:1.400px;background:#1e1e1e"></div>
<div class="abs" style="left:0;top:1.400px;width:601px;height:6px;background:linear-gradient(rgba(0,0,0,.55),rgba(0,0,0,0))"></div>
<div class="abs" style="left:66.5px;top:438.500px;width:394.7px;height:13px;background:rgba(121,121,121,.38)"></div>
<svg class="abs" style="left:550.2px;top:0" width="52" height="60" viewBox="0 0 52 60"><rect x="0" y="-3" width="8" height="1" fill="#5a7a9a" opacity=".55"/><rect x="2" y="-1.7" width="11.2" height="1" fill="#5a7a9a" opacity=".55"/><rect x="4" y="-0.4" width="12.8" height="1" fill="#9a9a7a" opacity=".55"/><rect x="4" y="0.9" width="40" height="1" fill="#6a6a6a" opacity=".55"/><rect x="4" y="2.2" width="24" height="1" fill="#6aa0a0" opacity=".55"/><rect x="4" y="3.5" width="41.6" height="1" fill="#6a6a6a" opacity=".55"/><rect x="4" y="4.8" width="25.6" height="1" fill="#6aa0a0" opacity=".55"/><rect x="2" y="6.1" width="4.8" height="1" fill="#5a7a9a" opacity=".55"/><rect x="0" y="7.4" width="7.2" height="1" fill="#5a7a9a" opacity=".55"/><rect x="0" y="10" width="6.4" height="1" fill="#5a7a9a" opacity=".55"/><rect x="2" y="11.3" width="28.8" height="1" fill="#9a7a6a" opacity=".55"/><rect x="2" y="12.6" width="30.4" height="1" fill="#9a7a6a" opacity=".55"/><rect x="2" y="15.2" width="11.2" height="1" fill="#9a7a9a" opacity=".55"/><rect x="4" y="16.5" width="8" height="1" fill="#7a9ab0" opacity=".55"/><rect x="4" y="17.8" width="6.4" height="1" fill="#9a9a7a" opacity=".55"/><rect x="6" y="19.1" width="8" height="1" fill="#7a9ab0" opacity=".55"/><rect x="6" y="20.4" width="9.6" height="1" fill="#7a9ab0" opacity=".55"/><rect x="4" y="21.7" width="2.4" height="1" fill="#777" opacity=".55"/><rect x="4" y="23" width="9.6" height="1" fill="#7a9ab0" opacity=".55"/><rect x="6" y="24.3" width="6.4" height="1" fill="#7a9ab0" opacity=".55"/><rect x="6" y="25.6" width="6.4" height="1" fill="#7a9ab0" opacity=".55"/><rect x="4" y="26.9" width="2.4" height="1" fill="#777" opacity=".55"/><rect x="4" y="28.2" width="8" height="1" fill="#7a9ab0" opacity=".55"/><rect x="6" y="29.5" width="16" height="1" fill="#9a9a7a" opacity=".55"/><rect x="8" y="30.8" width="27.2" height="1" fill="#8a8a7a" opacity=".55"/><rect x="6" y="32.1" width="2.4" height="1" fill="#777" opacity=".55"/><rect x="6" y="33.4" width="16" height="1" fill="#9a9a7a" opacity=".55"/><rect x="8" y="34.7" width="28.8" height="1" fill="#8a8a7a" opacity=".55"/><rect x="6" y="36" width="2.4" height="1" fill="#777" opacity=".55"/><rect x="4" y="37.3" width="2.4" height="1" fill="#777" opacity=".55"/><rect x="2" y="38.6" width="2.4" height="1" fill="#777" opacity=".55"/><rect x="0" y="39.9" width="7.2" height="1" fill="#5a7a9a" opacity=".55"/><rect x="0" y="42.5" width="6.4" height="1" fill="#5a7a9a" opacity=".55"/><rect x="2" y="43.8" width="6.4" height="1" fill="#9a8a6a" opacity=".55"/><rect x="4" y="45.1" width="22.4" height="1" fill="#7a9ab0" opacity=".55"/><rect x="2" y="46.4" width="2.4" height="1" fill="#777" opacity=".55"/><rect x="0" y="47.7" width="6.4" height="1" fill="#5a7a9a" opacity=".55"/></svg>
<div class="abs" style="left:601.0px;top:22px;width:14px;height:194px;background:#454545"></div>
</div>
</div>
<div id="panel">
<div class="abs" style="left:0;top:-1.300px;width:1231px;height:1px;background:#4a4a4a"></div>
<div class="pt" style="left:19.5px;letter-spacing:0.23px;">问题</div>
<div class="pt" style="left:66.1px;letter-spacing:-0.13px;">输出</div>
<div class="pt" style="left:112.5px;letter-spacing:0.05px;">调试控制台</div>
<div class="pt" style="left:190.7px;letter-spacing:0.48px;color:#e7e7e7">终端</div>
<div class="abs" style="left:189.1px;top:29.700px;width:26.2px;height:1px;background:#e7e7e7"></div>
<svg class="abs" style="left:1035.6px;top:8.300px" width="16" height="16" viewBox="0 0 16 16" fill="none" stroke="#c5c5c5" stroke-width="1.3" ><path d="M8 1.500v13M1.500 8h13"/></svg>
<svg class="abs" style="left:1052.0px;top:8.300px" width="16" height="16" viewBox="0 0 16 16" fill="none" stroke="#c5c5c5" stroke-width="1.3" ><path d="M4.300 6.300L8 10l3.700-3.700"/></svg>
<svg class="abs" style="left:1075.1px;top:8.300px" width="16" height="16" viewBox="0 0 16 16" fill="none" stroke="#c5c5c5" stroke-width="1.3" ><rect x="1" y="2" width="14" height="12" rx="1"/><path d="M1 5h14"/><text x="3" y="12" font-size="6" font-weight="bold" fill="#c5c5c5" stroke="none" font-family="Liberation Sans,sans-serif">C:\</text></svg>
<div class="abs" style="left:1095.4px;top:0;height:35px;line-height:35px;font-size:12px;color:#ccc;letter-spacing:-0.50px">node</div>
<svg class="abs" style="left:1130.4px;top:8.300px" width="16" height="16" viewBox="0 0 16 16" fill="none" stroke="#c5c5c5" stroke-width="1.3" ><rect x="1.500" y="2.500" width="13" height="11" rx="1"/><path d="M8 2.500v11"/></svg>
<svg class="abs" style="left:1155.4px;top:8.300px" width="16" height="16" viewBox="0 0 16 16" fill="none" stroke="#c5c5c5" stroke-width="1.3" ><path d="M2.500 4.500h11M6 4.500v-2h4v2M4 4.500l.700 9.500h6.600l.700-9.500M6.500 7v5M8 7v5M9.500 7v5"/></svg>
<svg class="abs" style="left:1181.9px;top:8.300px" width="16" height="16" viewBox="0 0 16 16" fill="none" stroke="#c5c5c5" stroke-width="1.3" ><path d="M3 10l5-5 5 5"/></svg>
<svg class="abs" style="left:1204.0px;top:8.300px" width="16" height="16" viewBox="0 0 16 16" fill="none" stroke="#c5c5c5" stroke-width="1.3" ><path d="M3.300 3.300l9.400 9.400M12.700 3.300l-9.400 9.400"/></svg>
<div class="term" style="left:19.5px;top:44.0px"><span style="display:inline-block;height:16.200px;vertical-align:top;background:#3bb574;color:#1e1e1e"> DONE </span><span style="color:#3bb574"> Compiled successfully in 87ms</span></div>
<div class="term" style="left:19.5px;top:92.6px">  App running at:</div>
<div class="term" style="left:19.5px;top:108.8px">  - Local:   <span style="color:#3d97d3">http://localhost:<b style="color:#58c4ee">8080</b>/</span></div>
<div class="term" style="left:19.5px;top:125.0px">  - Network: <span style="color:#3d97d3">http://192.168.0.105:<b style="color:#58c4ee">8080</b>/</span></div>
<div class="term" style="left:1150.1px;top:44.0px"><span style="color:#8c8c8c">15:50:18</span></div>
</div>
<div id="status">
<svg style="left:15.4px;top:3.500px" width="14" height="14" viewBox="0 0 16 16" fill="none" stroke="#fff" stroke-width="1.35"><circle cx="8" cy="8" r="6"/><path d="M5.500 5.500l5 5M10.500 5.500l-5 5"/></svg>
<span style="left:32.3px;font-size:12px;letter-spacing:-1.00px;">0</span>
<svg style="left:42.9px;top:3.500px" width="14" height="14" viewBox="0 0 16 16" fill="none" stroke="#fff" stroke-width="1.35"><path d="M8 2.200L14.300 13.500H1.700z" stroke-linejoin="round"/><path d="M8 6.500v3.500M8 11.200v1.200"/></svg>
<span style="left:59.4px;font-size:12px;letter-spacing:-1.00px;">0</span>
<svg style="left:82.1px;top:3.500px" width="14" height="14" viewBox="0 0 16 16" fill="none" stroke="#fff" stroke-width="1.3"><path d="M13.200 6.500A5.500 5.500 0 0 0 3.300 5M2.800 9.500A5.500 5.500 0 0 0 12.700 11"/><path d="M3.200 2.200v3h3M12.800 13.800v-3h-3"/></svg>
<span style="left:99.6px;font-size:12px;letter-spacing:-0.31px;">正在初始化 JS/TS 语言功能</span>
<span style="left:1148.7px;font-size:12px;letter-spacing:-0.13px;">行 4，列 32</span>
<span style="left:1226.9px;font-size:12px;letter-spacing:-0.30px;">空格: 4</span>
<span style="left:1279.0px;font-size:12px;letter-spacing:-0.50px;">UTF-8</span>
<span style="left:1326.4px;font-size:12px;letter-spacing:-1.36px;">CRLF</span>
<span style="left:1368.8px;font-size:12px;letter-spacing:-0.40px;">Vue</span>
<svg style="left:1405.5px;top:3.500px" width="14" height="14" viewBox="0 0 16 16" fill="none" stroke="#fff" stroke-width="1.35"><circle cx="8" cy="6.500" r="1.600"/><path d="M8 8.500v6"/><path d="M4.800 9.800a4.500 4.500 0 1 1 6.400 0M3.200 12a7 7 0 1 1 9.600 0" stroke-width="1.100"/></svg>
<span style="left:1422.2px;font-size:12px;letter-spacing:-0.32px;">Go Live</span>
<svg style="left:1477.1px;top:3.500px" width="14" height="14" viewBox="0 0 16 16" fill="none" stroke="#fff" stroke-width="1.35"><circle cx="6" cy="5" r="2.500"/><path d="M1.500 14c0-3 2-4.800 4.500-4.800 1 0 1.800.300 2.500.700"/><path d="M9 2.500h5.500v5H12l-1.500 1.500V7.500H9.800"/></svg>
<svg style="left:1508.1px;top:3.500px" width="14" height="14" viewBox="0 0 16 16" fill="none" stroke="#fff" stroke-width="1.35"><path d="M3 11.500h10l-1.300-2V6.500a3.700 3.700 0 0 0-7.400 0v3zM6.800 13.200a1.300 1.300 0 0 0 2.400 0"/><circle cx="12.300" cy="3.900" r="2.700" fill="#fff" stroke="none"/></svg>
</div>
</div>
<svg id="anno" width="1512" height="803" viewBox="0 0 1512 803" fill="none" stroke="#dc3339" stroke-width="3" stroke-linejoin="miter">
<rect x="376.300" y="154" width="370.500" height="35.500"/>
<rect x="372.100" y="325.300" width="360.600" height="115.200"/>
<rect x="1027.500" y="98.500" width="423" height="35.500"/>
<rect x="1052.500" y="474.500" width="360" height="51.500"/>
<path stroke-width="2.500" d="M769 187.600L794.300 175.200 792.900 182.900 1078 169 1078 170.500 794.300 191.200 795.200 198.300Z"/>
<path stroke-width="2.500" d="M687.900 202L754.600 358 761.600 356.300 759.100 383 738.500 365.500 744.700 364.300Z"/>
<path stroke-width="2.500" d="M1236.400 206.600L1246.500 231.600 1238.600 228.300 1214.300 463.800 1213.200 463.800 1230.400 226.800 1222.300 229.400Z"/>
<text x="1327" y="775.700" font-size="17.800" fill="rgba(255,255,255,.4)" stroke="none" font-family="Liberation Sans,Noto Sans CJK SC,sans-serif">@稀土掘金技术社区</text>
</svg>
</body></html>
